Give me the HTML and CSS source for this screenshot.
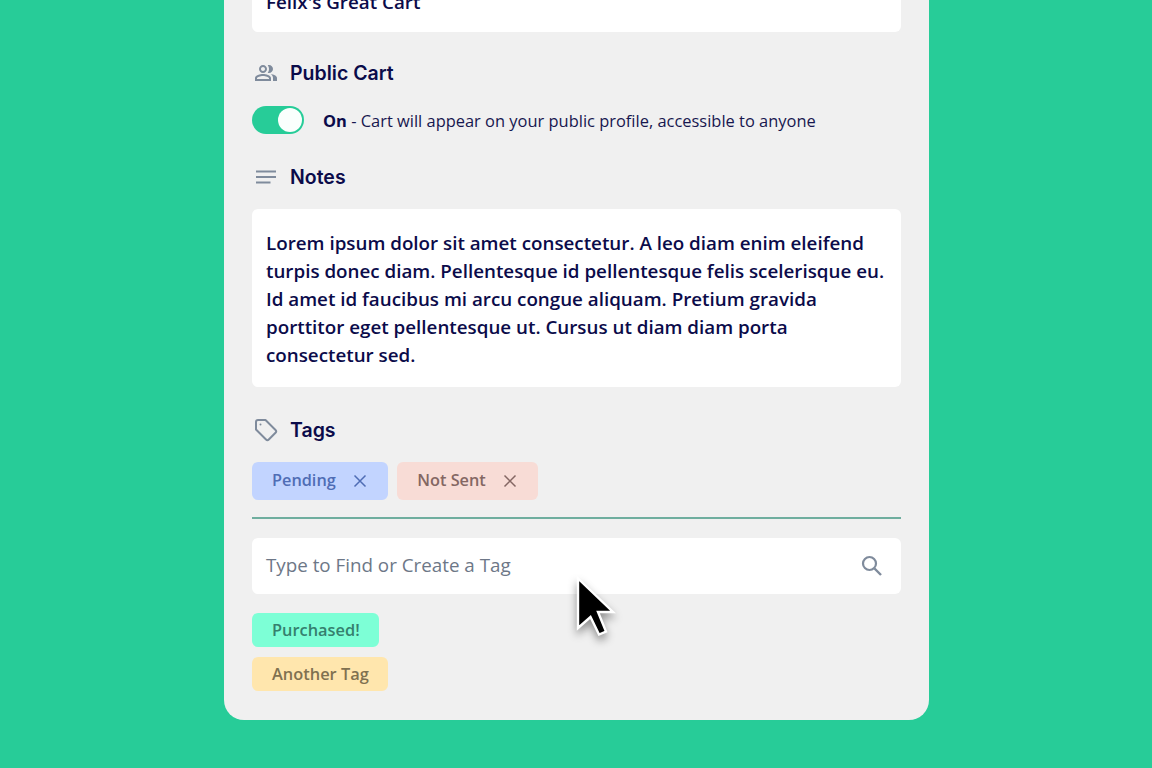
FILE: index.html
```html
<!DOCTYPE html>
<html lang="en">
<head>
<meta charset="utf-8">
<title>Cart settings</title>
<link rel="stylesheet" href="styles.css">
</head>
<body>
<main class="card">
  <div class="field name-field">Felix's Great Cart</div>

  <h2 class="heading heading-public">
    <svg class="icon" viewBox="0 0 24 24"><path fill="#7f8b9c" d="M16.7 13.1c1.4.9 2.3 2.2 2.3 3.9v3h4v-3c0-2.200-3.600-3.500-6.300-3.900zM15 12c2.200 0 4-1.800 4-4s-1.800-4-4-4c-.5 0-.9.1-1.300.2.8 1 1.300 2.400 1.300 3.800s-.5 2.800-1.300 3.800c.4.1.8.2 1.300.2zM9 12c2.200 0 4-1.800 4-4s-1.800-4-4-4-4 1.800-4 4 1.800 4 4 4zm0-6c1.100 0 2 .9 2 2s-.9 2-2 2-2-.9-2-2 .9-2 2-2zM9 13c-2.700 0-8 1.300-8 4v3h16v-3c0-2.700-5.300-4-8-4zm6 5H3v-1c.2-.7 3.300-2 6-2s5.800 1.300 6 2v1z"/></svg>
    <span>Public Cart</span>
  </h2>
  <div class="toggle-row">
    <span class="toggle"><span class="knob"></span></span>
    <p class="toggle-text"><strong>On</strong> - Cart will appear on your public profile, accessible to anyone</p>
  </div>

  <h2 class="heading heading-notes">
    <svg class="icon" viewBox="0 0 24 24"><path fill="#7f8b9c" d="M2 5.500h20v2H2zM2 11h20v2H2zM2 16.500h14.500v2H2z"/></svg>
    <span>Notes</span>
  </h2>
  <div class="field notes">Lorem ipsum dolor sit amet consectetur. A leo diam enim eleifend turpis donec diam. Pellentesque id pellentesque felis scelerisque eu. Id amet id faucibus mi arcu congue aliquam. Pretium gravida porttitor eget pellentesque ut. Cursus ut diam diam porta consectetur sed.</div>

  <h2 class="heading heading-tags">
    <svg class="icon" viewBox="0 0 24 24"><path fill="none" stroke="#7f8b9c" stroke-width="2" stroke-linejoin="round" d="M2 4a2 2 0 0 1 2-2h7.500l10 10a2 2 0 0 1 0 2.800l-6.700 6.700a2 2 0 0 1-2.800 0l-10-10z"/><circle cx="6.500" cy="6.500" r="1" fill="#7f8b9c"/></svg>
    <span>Tags</span>
  </h2>
  <div class="chips">
    <span class="chip chip-blue"><span class="chip-text">Pending</span><svg class="x" viewBox="0 0 14 14"><path d="M1.500 1.500l11 11M12.500 1.500l-11 11"/></svg></span>
    <span class="chip chip-red"><span class="chip-text">Not Sent</span><svg class="x" viewBox="0 0 14 14"><path d="M1.500 1.500l11 11M12.500 1.500l-11 11"/></svg></span>
  </div>
  <hr class="rule">
  <div class="search">
    <span class="search-text">Type to Find or Create a Tag</span>
    <svg class="search-icon" viewBox="0 0 24 24"><circle cx="9.500" cy="9.500" r="6.500" fill="none" stroke="#7f8b9c" stroke-width="2.200"/><path d="M14.500 14.500l6.500 6.500" stroke="#7f8b9c" stroke-width="2.400" fill="none"/></svg>
  </div>
  <div class="options">
    <span class="option option-green">Purchased!</span>
    <span class="option option-yellow">Another Tag</span>
  </div>

  <svg class="cursor" viewBox="0 0 50 70"><path d="M9 9.500V59L21.500 48l8.500 17.500 7-3L29 43h15z" fill="#000" stroke="#fff" stroke-width="2.400" stroke-linejoin="miter"/></svg>
</main>
</body>
</html>
```

FILE: styles.css
```css
* { box-sizing: border-box; }
html, body { margin: 0; height: 100%; }
body {
  height: 768px;
  overflow: hidden;
  background: #27cc98;
  display: flex;
  flex-direction: column;
  justify-content: flex-end;
  align-items: center;
  padding: 0 0 48px 1px;
  font-family: "Open Sans", sans-serif;
  color: #0b0b4a;
}
.card {
  position: relative;
  flex: none;
  width: 705px;
  background: #f0f0f0;
  border-radius: 0 0 20px 20px;
  padding: 0 28px 29px;
  display: flex;
  flex-direction: column;
}
.field {
  background: #fff;
  border-radius: 6px;
  padding: 0 14px;
  font-size: 18.800px;
  font-weight: 600;
  line-height: 28px;
}
.name-field { height: 52px; padding-top: 8px; }
.heading {
  display: flex;
  align-items: center;
  gap: 10px;
  margin: 0;
  height: 28px;
  font-family: "Inter", sans-serif;
  font-size: 19.500px;
  font-weight: 600;
  color: #0b0b4a;
}
.icon { width: 28px; height: 28px; padding: 2px; flex: none; }
.heading-public { margin-top: 27px; }
.heading-notes { margin-top: 29px; }
.heading-tags { margin-top: 29px; }
.toggle-row {
  display: flex;
  align-items: center;
  gap: 19px;
  margin-top: 19px;
}
.toggle {
  display: flex;
  justify-content: flex-end;
  align-items: center;
  width: 52px;
  height: 28px;
  padding: 2px;
  border-radius: 14px;
  background: #27cc98;
}
.knob { width: 24px; height: 24px; border-radius: 50%; background: #fafffd; }
.toggle-text { margin: 0; padding-top: 2px; font-size: 16.450px; line-height: 24px; color: #17174f; }
.toggle-text strong { font-weight: 700; color: #0b0b4a; }
.notes { margin-top: 18px; padding: 20px 14px 18px; height: 178px; }
.chips { display: flex; gap: 9px; margin-top: 18px; }
.chip {
  display: flex;
  align-items: center;
  gap: 17px;
  height: 38px;
  padding: 0 21.500px 0 20px;
  border-radius: 6px;
  font-size: 16.300px;
  font-weight: 600;
}
.chip-text { padding-bottom: 2px; }
.x { width: 14px; height: 14px; fill: none; stroke: currentColor; stroke-width: 1.500; }
.chip-blue { background: #c2d4ff; color: #4f6db5; }
.chip-red { background: #f8dcd6; color: #846763; }
.rule { width: 100%; margin: 17px 0 0; border: 0; height: 2px; background: #6fae9f; }
.search {
  display: flex;
  align-items: center;
  justify-content: space-between;
  height: 56px;
  margin-top: 19px;
  padding: 0 17px 0 14px;
  background: #fff;
  border-radius: 6px;
  font-size: 18.800px;
  color: #6d7787;
}
.search-text { padding-bottom: 2px; }
.search-icon { width: 24px; height: 24px; }
.options { display: flex; flex-direction: column; align-items: flex-start; gap: 10px; margin-top: 19px; }
.option {
  display: flex;
  align-items: center;
  height: 34px;
  padding: 0 19.500px 2px 20px;
  border-radius: 6px;
  font-size: 16.400px;
  font-weight: 600;
}
.option-green { background: #7dffd6; color: #35806e; }
.option-yellow { background: #ffe6ad; color: #7f7150; }
.cursor {
  position: absolute;
  left: 345px;
  bottom: 81px;
  width: 50px;
  height: 70px;
  filter: drop-shadow(0 5px 4px rgba(0,0,0,.4));
}
```
